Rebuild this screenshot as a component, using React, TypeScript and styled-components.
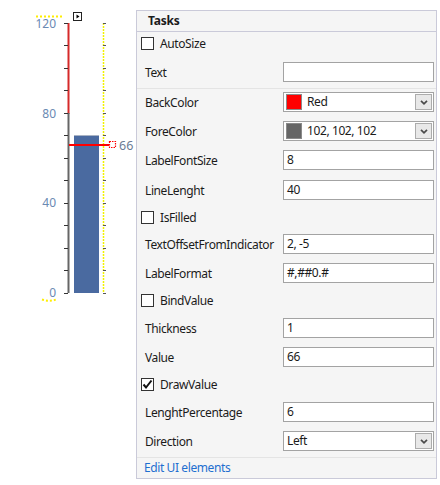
import React from "react";
import styled, { createGlobalStyle } from "styled-components";

const Global = createGlobalStyle`
  html, body { margin: 0; padding: 0; background: #ffffff; }
  body { font-family: "Noto Sans", "Open Sans", sans-serif; font-size: 12px; color: #1b1b1b; }
`;

const Page = styled.div`
  display: flex;
  align-items: flex-start;
  width: 440px;
  height: 485px;
`;

const GaugeArea = styled.div`
  width: 136px;
  height: 310px;
  flex: none;
`;

const Panel = styled.div`
  box-sizing: border-box;
  margin-top: 10px;
  width: 301px;
  height: 469px;
  border: 1px solid #cacad9;
  background: #f5f5f5;
  display: flex;
  flex-direction: column;
  letter-spacing: -0.4px;
`;

const Header = styled.div`
  height: 20px;
  line-height: 20px;
  padding-left: 11px;
  font-weight: 700;
  letter-spacing: -0.2px;
  border-bottom: 1px solid #cacad9;
`;

const CheckRow = styled.div<{ $mt: number }>`
  display: flex;
  align-items: center;
  height: 13px;
  margin-top: ${(p) => p.$mt}px;
  padding-left: 4px;
`;

const Box = styled.span`
  box-sizing: border-box;
  width: 13px;
  height: 13px;
  border: 1px solid #333333;
  background: #ffffff;
  display: flex;
  align-items: center;
  justify-content: center;
`;

const CheckLabel = styled.span`
  margin-left: 6px;
  line-height: 13px;
`;

const FieldRow = styled.div<{ $mt: number }>`
  display: grid;
  grid-template-columns: 1fr 151px;
  align-items: center;
  height: 20px;
  margin-top: ${(p) => p.$mt}px;
  padding-left: 8px;
  padding-right: 2px;
`;

const Label = styled.span`
  white-space: nowrap;
`;

const Input = styled.div`
  box-sizing: border-box;
  height: 20px;
  border: 1px solid #a3a3a3;
  background: #ffffff;
  padding-left: 3px;
  line-height: 17px;
`;

const Combo = styled.div`
  box-sizing: border-box;
  height: 20px;
  border: 1px solid #a3a3a3;
  background: #ffffff;
  display: flex;
  align-items: center;
  padding: 1px 1px 1px 2px;
`;

const Swatch = styled.span<{ $c: string }>`
  box-sizing: border-box;
  width: 16px;
  height: 16px;
  background: ${(p) => p.$c};
  border: 1px solid #8a8a8a;
  flex: none;
`;

const ComboText = styled.span<{ $pad: number }>`
  flex: 1;
  padding-left: ${(p) => p.$pad}px;
  line-height: 16px;
  align-self: flex-start;
`;

const DropBtn = styled.span`
  box-sizing: border-box;
  width: 17px;
  height: 16px;
  border: 1px solid #acacac;
  background: #e8e8e8;
  display: flex;
  align-items: center;
  justify-content: center;
  flex: none;
`;

const Separator = styled.div<{ $mt: number }>`
  height: 1px;
  margin-top: ${(p) => p.$mt}px;
  background: #e4e4e4;
`;

const LinkRow = styled.div`
  height: 19px;
  line-height: 19px;
  padding-left: 7px;
  color: #1f6fd0;
`;

type Row =
  | { kind: "check"; label: string; checked?: boolean; mt: number }
  | { kind: "field"; label: string; value: string; mt: number; swatch?: string; drop?: boolean }
  | { kind: "sep"; mt: number };

const rows: Row[] = [
  { kind: "check", label: "AutoSize", mt: 5 },
  { kind: "field", label: "Text", value: "", mt: 12 },
  { kind: "sep", mt: 6 },
  { kind: "field", label: "BackColor", value: "Red", mt: 3, swatch: "#ff0000", drop: true },
  { kind: "field", label: "ForeColor", value: "102, 102, 102", mt: 9, swatch: "#666666", drop: true },
  { kind: "field", label: "LabelFontSize", value: "8", mt: 9 },
  { kind: "field", label: "LineLenght", value: "40", mt: 10 },
  { kind: "check", label: "IsFilled", mt: 11 },
  { kind: "field", label: "TextOffsetFromIndicator", value: "2, -5", mt: 10 },
  { kind: "field", label: "LabelFormat", value: "#,##0.#", mt: 9 },
  { kind: "check", label: "BindValue", mt: 11 },
  { kind: "field", label: "Thickness", value: "1", mt: 11 },
  { kind: "field", label: "Value", value: "66", mt: 9 },
  { kind: "check", label: "DrawValue", checked: true, mt: 11 },
  { kind: "field", label: "LenghtPercentage", value: "6", mt: 11 },
  { kind: "field", label: "Direction", value: "Left", mt: 9, drop: true },
  { kind: "sep", mt: 6 },
];

const Chevron = () => (
  <svg width="8" height="5" viewBox="0 0 8 5">
    <polyline points="1,0.8 4,3.8 7,0.8" fill="none" stroke="#4a4a4a" strokeWidth="1.7" />
  </svg>
);

const Check = () => (
  <svg width="11" height="11" viewBox="0 0 11 11">
    <polyline points="1.5,5.5 4,8.5 9.5,1.5" fill="none" stroke="#111" strokeWidth="2" />
  </svg>
);

const Gauge = () => {
  const top = 23;
  const bottom = 292.5;
  const step = (bottom - top) / 12;
  const ticks = Array.from({ length: 13 }, (_, i) => Math.round(top + i * step) + 0.5);
  const labels = [
    { t: "120", y: 23 },
    { t: "80", y: 113 },
    { t: "40", y: 202 },
    { t: "0", y: 292 },
  ];
  return (
    <svg width="136" height="310" viewBox="0 0 136 310" style={{ display: "block" }}>
      <line x1="36" y1="16.5" x2="63" y2="16.5" stroke="#ffee00" strokeWidth="2" strokeDasharray="2 2" />
      <path d="M42 299.5 Q49 302 56 299.5" fill="none" stroke="#ffee00" strokeWidth="2" strokeDasharray="2 2" />
      {labels.map((l) => (
        <text
          key={l.t}
          x="56"
          y={l.y + 4.5}
          textAnchor="end"
          fontFamily="Noto Sans, sans-serif"
          fontSize="12"
          fill="#6a8ab3"
        >
          {l.t}
        </text>
      ))}
      <rect x="67.5" y="23" width="2" height="91" fill="#d62a2a" />
      <rect x="67.5" y="113" width="2" height="180" fill="#666666" />
      {ticks.map((y) => (
        <line key={"l" + y} x1="64" y1={y} x2="68" y2={y} stroke="#333" strokeWidth="1" />
      ))}
      <rect x="74" y="135" width="25" height="158" fill="#4a6aa0" />
      <rect x="74" y="135" width="25" height="1" fill="#a9b3c4" />
      <line x1="103.5" y1="23" x2="103.5" y2="293" stroke="#f2f200" strokeWidth="1.5" strokeDasharray="2 1" />
      {ticks.map((y) => (
        <line key={"r" + y} x1="103" y1={y} x2="106" y2={y} stroke="#555" strokeWidth="1" />
      ))}
      <rect x="69" y="144" width="40" height="2" fill="#ff0000" />
      <rect x="109.5" y="141.5" width="6" height="6" fill="none" stroke="#ff0000" strokeWidth="1.2" strokeDasharray="1.5 1" />
      <text x="119" y="149.5" fontFamily="Noto Sans, sans-serif" fontSize="12.5" fill="#6b7c94">
        66
      </text>
      <rect x="73.5" y="12.5" width="8" height="8" fill="#ffffff" stroke="#222" strokeWidth="1" />
      <polygon points="76.5,14.5 79.5,16.5 76.5,18.5" fill="#000" />
    </svg>
  );
};

export default function App() {
  return (
    <>
      <Global />
      <Page>
        <GaugeArea>
          <Gauge />
        </GaugeArea>
        <Panel>
          <Header>Tasks</Header>
          {rows.map((r, i) => {
            if (r.kind === "sep") return <Separator key={i} $mt={r.mt} />;
            if (r.kind === "check")
              return (
                <CheckRow key={i} $mt={r.mt}>
                  <Box>{r.checked ? <Check /> : null}</Box>
                  <CheckLabel>{r.label}</CheckLabel>
                </CheckRow>
              );
            return (
              <FieldRow key={i} $mt={r.mt}>
                <Label>{r.label}</Label>
                {r.drop ? (
                  <Combo>
                    {r.swatch ? <Swatch $c={r.swatch} /> : null}
                    <ComboText $pad={r.swatch ? 5 : 1}>{r.value}</ComboText>
                    <DropBtn>
                      <Chevron />
                    </DropBtn>
                  </Combo>
                ) : (
                  <Input>{r.value}</Input>
                )}
              </FieldRow>
            );
          })}
          <LinkRow>Edit UI elements</LinkRow>
        </Panel>
      </Page>
    </>
  );
}
